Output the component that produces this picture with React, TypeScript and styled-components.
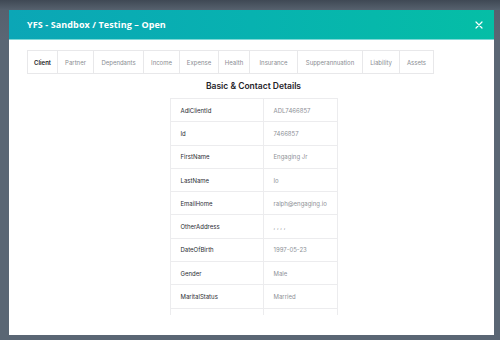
import React from 'react';
import styled, { createGlobalStyle } from 'styled-components';

const GlobalStyle = createGlobalStyle`
  html, body {
    margin: 0;
    padding: 0;
  }
  body {
    width: 500px;
    height: 340px;
    overflow: hidden;
    background: #5a6674;
    font-family: Inter, "Noto Sans", sans-serif;
  }
`;

const tabs = [
  { label: 'Client', width: 31 },
  { label: 'Partner', width: 36 },
  { label: 'Dependants', width: 50 },
  { label: 'Income', width: 36 },
  { label: 'Expense', width: 39 },
  { label: 'Health', width: 31 },
  { label: 'Insurance', width: 48 },
  { label: 'Supperannuation', width: 65 },
  { label: 'Liability', width: 37 },
  { label: 'Assets', width: 34 },
];

const rows: [string, string][] = [
  ['AdlClientId', 'ADL7466857'],
  ['Id', '7466857'],
  ['FirstName', 'Engaging Jr'],
  ['LastName', 'Io'],
  ['EmailHome', 'ralph@engaging.io'],
  ['OtherAddress', ', , , ,'],
  ['DateOfBirth', '1997-05-23'],
  ['Gender', 'Male'],
  ['MaritalStatus', 'Married'],
  ['', ''],
];

const App = () => {
  return (
    <>
      <GlobalStyle />
      <Backdrop>
        <Modal>
          <ModalHeader>
            <ModalTitle>YFS - Sandbox / Testing – Open</ModalTitle>
            <CloseButton aria-label="close">
              <svg width="8" height="8" viewBox="0 0 8 8">
                <path d="M1 1L7 7M7 1L1 7" stroke="#fff" strokeWidth="1.2" strokeLinecap="round" />
              </svg>
            </CloseButton>
          </ModalHeader>
          <ModalBody>
            <TabList>
              {tabs.map((t, i) => (
                <Tab key={t.label} $active={i === 0} $first={i === 0} style={{ width: t.width }}>
                  {t.label}
                </Tab>
              ))}
            </TabList>
            <SectionTitle>Basic &amp; Contact Details</SectionTitle>
            <TableScroll>
              <DetailsTable>
                <tbody>
                  {rows.map(([k, v], i) => (
                    <tr key={i}>
                      <KeyCell>{k}</KeyCell>
                      <ValueCell>{v}</ValueCell>
                    </tr>
                  ))}
                </tbody>
              </DetailsTable>
            </TableScroll>
          </ModalBody>
        </Modal>
      </Backdrop>
    </>
  );
};

const Backdrop = styled.div`
  width: 500px;
  height: 340px;
  box-sizing: border-box;
  padding: 10px 6px 4px 9px;
  background: linear-gradient(180deg, #3f4854 0px, #56616e 10px, #5a6674 40px);
  display: flex;
`;

const Modal = styled.div`
  width: 485px;
  height: 325px;
  background: #fff;
  display: flex;
  flex-direction: column;
  overflow: hidden;
`;

const ModalHeader = styled.div`
  height: 30px;
  flex: none;
  box-sizing: border-box;
  padding: 0 10px 0 18px;
  background: linear-gradient(90deg, #0ba6b6 0%, #07b2b0 50%, #05bea6 100%);
  border-bottom: 1px solid #7fd8d6;
  display: flex;
  align-items: center;
  justify-content: space-between;
`;

const ModalTitle = styled.div`
  color: #fff;
  font-family: "Open Sans", Lato, sans-serif;
  font-weight: 700;
  font-size: 9px;
  letter-spacing: 0.1px;
`;

const CloseButton = styled.button`
  border: 0;
  background: none;
  padding: 0;
  width: 10px;
  height: 10px;
  display: flex;
  align-items: center;
  justify-content: center;
`;

const ModalBody = styled.div`
  flex: 1;
  padding: 10px 14px 0 18px;
  display: flex;
  flex-direction: column;
  align-items: center;
  min-height: 0;
`;

const TabList = styled.div`
  align-self: flex-start;
  display: flex;
  height: 24px;
`;

const Tab = styled.div<{ $active?: boolean; $first?: boolean }>`
  box-sizing: border-box;
  height: 24px;
  display: flex;
  align-items: center;
  justify-content: center;
  border: 1px solid #e8e8ea;
  border-left: ${p => (p.$first ? '1px solid #e8e8ea' : '0')};
  font-size: 6px;
  color: ${p => (p.$active ? '#222' : '#8a8d93')};
  font-weight: ${p => (p.$active ? 600 : 400)};
  white-space: nowrap;
`;

const SectionTitle = styled.div`
  margin-top: 7px;
  font-size: 8.5px;
  font-weight: 600;
  color: #1f2329;
  height: 17px;
  line-height: 10px;
`;

const TableScroll = styled.div`
  width: 168px;
  height: 217px;
  overflow: hidden;
  flex: none;
`;

const DetailsTable = styled.table`
  width: 168px;
  border-collapse: collapse;
  table-layout: fixed;
  border: 1px solid #ececee;
`;

const KeyCell = styled.td`
  width: 93px;
  height: 23.3px;
  box-sizing: border-box;
  padding: 0 0 0 10px;
  border-right: 1px solid #ececee;
  border-bottom: 1px solid #ececee;
  font-size: 6px;
  color: #2a2d33;
`;

const ValueCell = styled.td`
  box-sizing: border-box;
  padding: 0 0 0 10px;
  border-bottom: 1px solid #ececee;
  font-size: 6px;
  color: #8e9197;
`;

export default App;
